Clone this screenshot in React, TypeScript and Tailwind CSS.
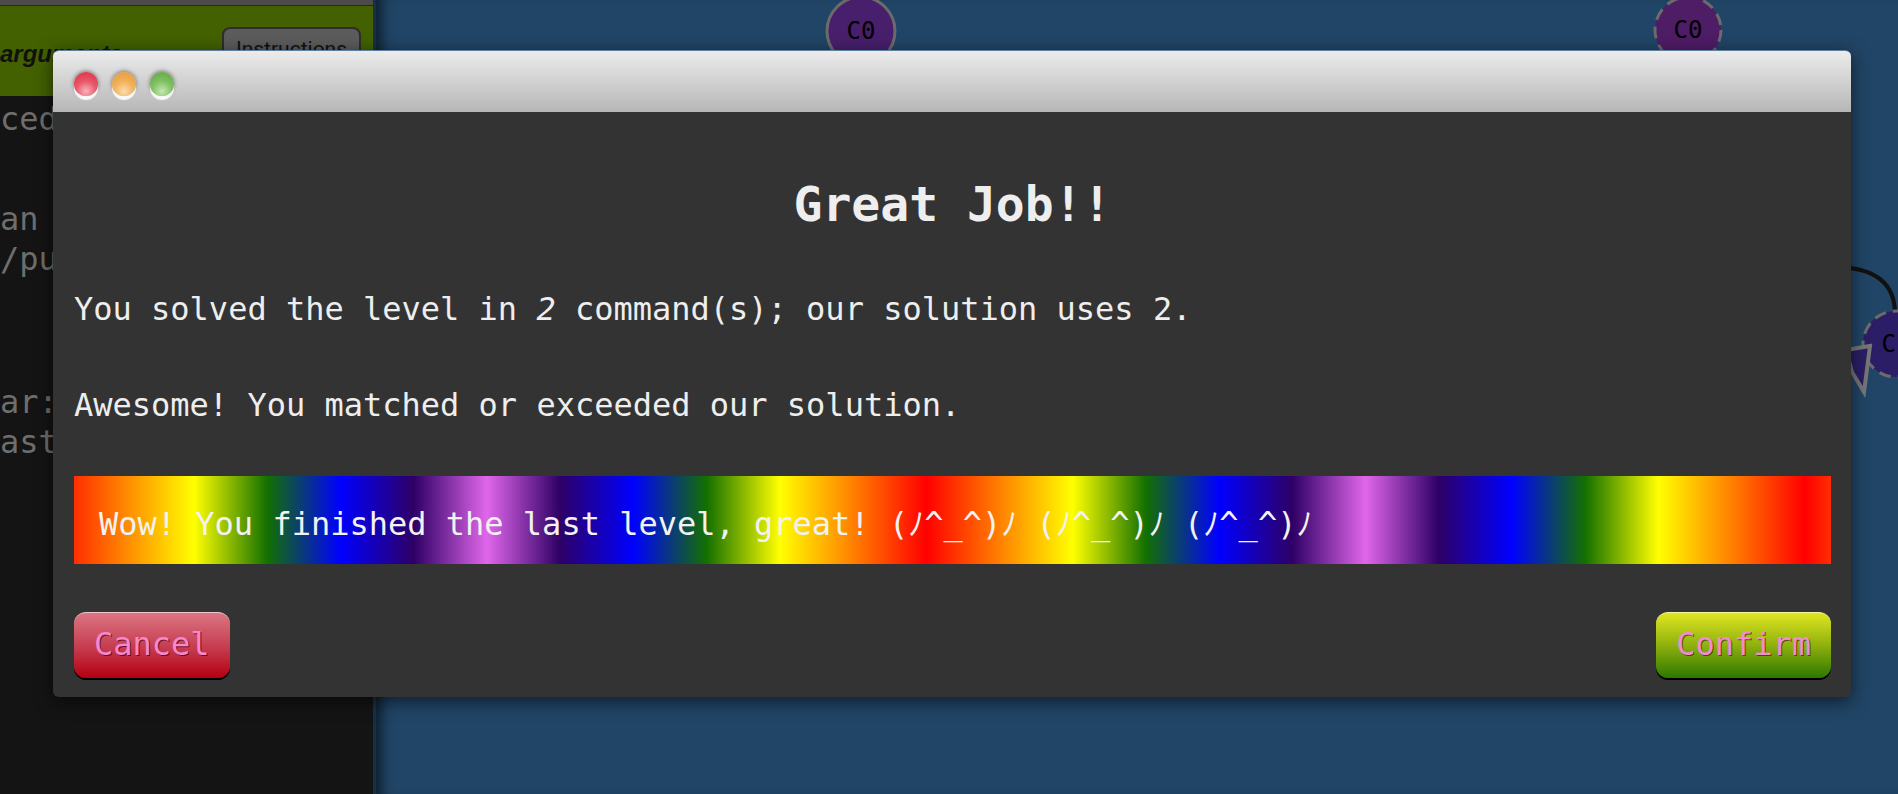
import React from "react";

const MONO = "font-[family-name:'DejaVu_Sans_Mono','Noto_Sans_CJK_JP',monospace]";

function Light({ cls }: { cls: string }) {
  return (
    <div
      className={`w-[24px] h-[24px] rounded-full shadow-[0_4px_1px_rgba(255,255,255,0.9),0_-1px_4px_rgba(0,0,0,0.45)] ${cls}`}
    />
  );
}

export default function App() {
  return (
    <div className={`relative w-[1898px] h-[794px] overflow-hidden flex bg-[#214566] ${MONO}`}>
      {/* left panel */}
      <div className="w-[376px] shrink-0 h-full flex flex-col bg-[#141414] border-r-[3px] border-[#17304a]">
        <div className="h-[5px] bg-[#4b4b4b]" />
        <div className="h-[1px] bg-[#1c2a38]" />
        <div className="h-[90px] bg-[#436100] flex items-start justify-between pr-[12px] pt-[21px]">
          <span className="mt-[13px] font-[family-name:'Liberation_Sans',Arial,sans-serif] font-bold italic text-[24px] leading-[28px] text-[#111]">
            arguments
          </span>
          <div className="w-[139px] h-[44px] rounded-[8px] border-2 border-[#2e2e2e] bg-[#5c5c5c] flex justify-center pt-[8px] font-[family-name:Roboto,sans-serif] text-[21px] leading-[24px] text-[#111]">
            Instructions
          </div>
        </div>
        <div className="text-[32px] leading-[40px] text-[#6e6e6e] whitespace-pre">
          <div className="mt-[3px]">ced</div>
          <div className="mt-[60px]">an</div>
          <div>/pu</div>
          <div className="mt-[103px]">ar:</div>
          <div>ast</div>
        </div>
      </div>

      {/* canvas */}
      <div className="relative flex-1 h-full shadow-[inset_14px_0_12px_-8px_rgba(0,0,0,0.55)]">
        <svg className="absolute inset-0" width="1522" height="794">
          <path d="M 1460 267 Q 1519 268 1519 314" stroke="#111" strokeWidth="4" fill="none" />
          <circle cx="485" cy="31" r="34" fill="#481f6c" stroke="#6b6b6b" strokeWidth="3" />
          <circle cx="1312" cy="30" r="33" fill="#4f1c66" stroke="#6b6b6b" strokeWidth="3" strokeDasharray="12 7" />
          <circle cx="1520" cy="344" r="33" fill="#2b1e66" stroke="#6b6b6b" strokeWidth="3" strokeDasharray="12 7" />
          <polygon points="1470,350 1494,346 1488,392 1476,372" fill="#2b1e66" stroke="#777" strokeWidth="4" strokeLinejoin="miter" />
        </svg>
        <div className="absolute left-[470px] top-[16px] w-[30px] text-center text-[24px] leading-[30px] text-black">C0</div>
        <div className="absolute left-[1297px] top-[15px] w-[30px] text-center text-[24px] leading-[30px] text-black">C0</div>
        <div className="absolute left-[1505px] top-[329px] w-[30px] text-center text-[24px] leading-[30px] text-black">C1</div>
      </div>

      {/* modal */}
      <div className="absolute left-[53px] top-[50px] w-[1798px] h-[647px] flex flex-col rounded-[6px] shadow-[0_4px_18px_rgba(0,0,0,0.6)]">
        <div className="h-[62px] shrink-0 rounded-t-[6px] bg-[linear-gradient(to_bottom,#ececec,#b6b6b6)] border-t border-[#5f7f9f] flex items-start gap-[14px] pl-[21px] pt-[21px]">
          <Light cls="bg-[radial-gradient(circle_at_50%_80%,#f6b3bb_0%,#e9566a_45%,#dc2f42_100%)]" />
          <Light cls="bg-[radial-gradient(circle_at_50%_80%,#fadcaa_0%,#f1b05a_45%,#e49a38_100%)]" />
          <Light cls="bg-[radial-gradient(circle_at_50%_80%,#c4e8b0_0%,#80c062_45%,#5ea543_100%)]" />
        </div>
        <div className="flex-1 bg-[#333333] rounded-b-[6px] flex flex-col pl-[21px] pr-[20px] text-[#eeeeee]">
          <div className="mt-[68px] text-center font-bold text-[48px] leading-[48px]">Great Job!!</div>
          <div className="mt-[65px] text-[32px] leading-[32px] whitespace-pre">
            You solved the level in <em className="italic">2</em> command(s); our solution uses 2.
          </div>
          <div className="mt-[64px] text-[32px] leading-[32px]">Awesome! You matched or exceeded our solution.</div>
          <div className="mt-[55px] h-[88px] pl-[25px] pt-[32px] text-[32px] leading-[32px] text-[#f2f2f2] whitespace-pre bg-[linear-gradient(90deg,#ff0000_-1.5%,#ff8000_2.67%,#ffff00_6.83%,#137000_11%,#0000ff_15.17%,#2e0066_19.33%,#e066ea_23.5%,#2e0066_27.67%,#0000ff_31.83%,#137000_36%,#ffff00_40.17%,#ff8000_44.33%,#ff0000_48.5%,#ff8000_52.67%,#ffff00_56.83%,#137000_61%,#0000ff_65.17%,#2e0066_69.33%,#e066ea_73.5%,#2e0066_77.67%,#0000ff_81.83%,#137000_86%,#ffff00_90.17%,#ff8000_94.33%,#ff0000_98.5%,#ff8000_102.67%)]">
            Wow! You finished the last level, great! (ﾉ^_^)ﾉ (ﾉ^_^)ﾉ (ﾉ^_^)ﾉ
          </div>
          <div className="mt-[48px] flex justify-between">
            <button className="h-[66px] px-[20px] rounded-[12px] border-t border-[#f3c6cc] bg-[linear-gradient(to_bottom,#db7583,#c53a4d_55%,#b3000f)] shadow-[0_2px_0_#000] text-[32px] leading-[32px] text-[#f787cc] [text-shadow:1px_1px_0_rgba(60,0,20,0.7)] flex items-center pb-[4px]">
              Cancel
            </button>
            <button className="h-[66px] px-[20px] rounded-[12px] border-t border-[#f2f59a] bg-[linear-gradient(to_bottom,#dfe620,#8fb00e_50%,#2c7800)] shadow-[0_2px_0_#000] text-[32px] leading-[32px] text-[#f28bd2] [text-shadow:1px_1px_0_rgba(40,40,0,0.7)] flex items-center pb-[4px]">
              Confirm
            </button>
          </div>
        </div>
      </div>
    </div>
  );
}
